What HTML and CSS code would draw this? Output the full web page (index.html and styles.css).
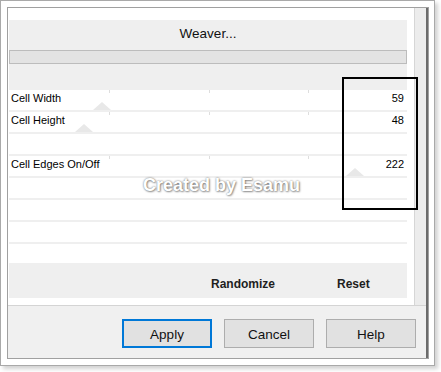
FILE: index.html
```html
<!DOCTYPE html>
<html>
<head>
<meta charset="utf-8">
<title>Weaver</title>
<link rel="stylesheet" href="styles.css">
</head>
<body>
<div class="screen">
  <div class="window">
    <div class="frame">
      <div class="main">
        <div class="content">
          <div class="head">
            <div class="title">Weaver...</div>
            <div class="progress"></div>
          </div>
          <div class="rows">
            <div class="row slider"><span>Cell Width</span><span>59</span><i class="thumb" style="left:84px"></i></div>
            <div class="row slider"><span>Cell Height</span><span>48</span><i class="thumb" style="left:66px"></i></div>
            <div class="row"></div>
            <div class="row slider"><span>Cell Edges On/Off</span><span>222</span><i class="thumb" style="left:337px"></i></div>
            <div class="row"></div>
            <div class="row"></div>
            <div class="row"></div>
            <div class="row last"></div>
          </div>
          <div class="actions"><span>Randomize</span><span>Reset</span></div>
        </div>
        <div class="strip"></div>
      </div>
      <div class="footer">
        <div class="btn primary">Apply</div>
        <div class="btn">Cancel</div>
        <div class="btn">Help</div>
      </div>
    </div>
  </div>
</div>
<div class="highlight"></div>
<div class="watermark">Created by Esamu</div>
</body>
</html>
```
FILE: styles.css
```css
html, body {
  margin: 0;
  padding: 0;
  background: #fff;
}
body {
  width: 441px;
  height: 372px;
  overflow: hidden;
  position: relative;
  font-family: "Liberation Sans", Arial, sans-serif;
  color: #000;
}
.screen {
  box-sizing: border-box;
  width: 435px;
  height: 366px;
  border: 1px solid #a9a9a9;
  padding: 6px 5px 6px 6px;
  background: #fff;
  box-shadow: 3px 3px 4px rgba(0, 0, 0, 0.18);
}
.window {
  box-sizing: border-box;
  height: 100%;
  border: 1px solid #a0a0a0;
}
.frame {
  box-sizing: border-box;
  height: 100%;
  border-right: 2px solid #6b6b6b;
  display: flex;
  flex-direction: column;
}
.main {
  display: flex;
  height: 297px;
}
.content {
  width: 406px;
  background: #fff;
  padding-top: 12px;
  box-sizing: border-box;
}
.strip {
  flex: 1;
  background: #ececec;
  border-left: 1px solid #d6d6d6;
}
.head {
  margin-left: 1px;
  width: 398px;
  height: 70px;
  box-sizing: border-box;
  padding-top: 6px;
  background: #efefef;
}
.title {
  font-size: 13.5px;
  line-height: 16px;
  text-align: center;
  color: #111;
}
.progress {
  margin-top: 8px;
  height: 14px;
  box-sizing: border-box;
  border: 1px solid #bcbcbc;
  background: #e3e3e3;
}
.rows {
  margin-left: 1px;
  width: 398px;
}
.row {
  position: relative;
  box-sizing: border-box;
  height: 22px;
  border-bottom: 2px solid #efefef;
  padding: 2px 3px 0 2px;
  display: flex;
  justify-content: space-between;
  font-size: 11px;
  line-height: 13px;
}
.row.last {
  height: 19px;
  border-bottom: 0;
}
.row.slider {
  background:
    linear-gradient(#dedede, #dedede) 100px 0 / 1px 3px no-repeat,
    linear-gradient(#dedede, #dedede) 200px 0 / 1px 3px no-repeat,
    linear-gradient(#dedede, #dedede) 299px 0 / 1px 3px no-repeat;
}
.thumb {
  position: absolute;
  bottom: 0;
  width: 0;
  height: 0;
  border-left: 9px solid transparent;
  border-right: 9px solid transparent;
  border-bottom: 8px solid #e8e8e8;
}
.actions {
  margin-left: 1px;
  width: 398px;
  height: 35px;
  box-sizing: border-box;
  padding: 14px 0 0 202px;
  background: #efefef;
  display: flex;
  gap: 62px;
  font-weight: bold;
  font-size: 12px;
  line-height: 14px;
  color: #1e1e1e;
}
.footer {
  flex: 1;
  box-sizing: border-box;
  border-top: 1px solid #d4d4d4;
  background: #f0f0f0;
  display: flex;
  justify-content: flex-end;
  gap: 12px;
  padding: 13px 10px 0 0;
}
.btn {
  width: 90px;
  height: 29px;
  box-sizing: border-box;
  border: 1px solid #adadad;
  background: #e1e1e1;
  display: flex;
  align-items: center;
  justify-content: center;
  padding-top: 1px;
  font-size: 13.5px;
  color: #111;
}
.btn.primary {
  border: 2px solid #0078d7;
}
.highlight {
  position: absolute;
  left: 342px;
  top: 77px;
  width: 76px;
  height: 133px;
  box-sizing: border-box;
  border: 2px solid #000;
}
.watermark {
  position: absolute;
  left: 143px;
  top: 175px;
  font-weight: bold;
  font-size: 18px;
  line-height: 20px;
  color: #fff;
  white-space: nowrap;
  text-shadow: 0 0 2px rgba(0, 0, 0, 0.55), 1px 1px 2px rgba(0, 0, 0, 0.35);
}
```
